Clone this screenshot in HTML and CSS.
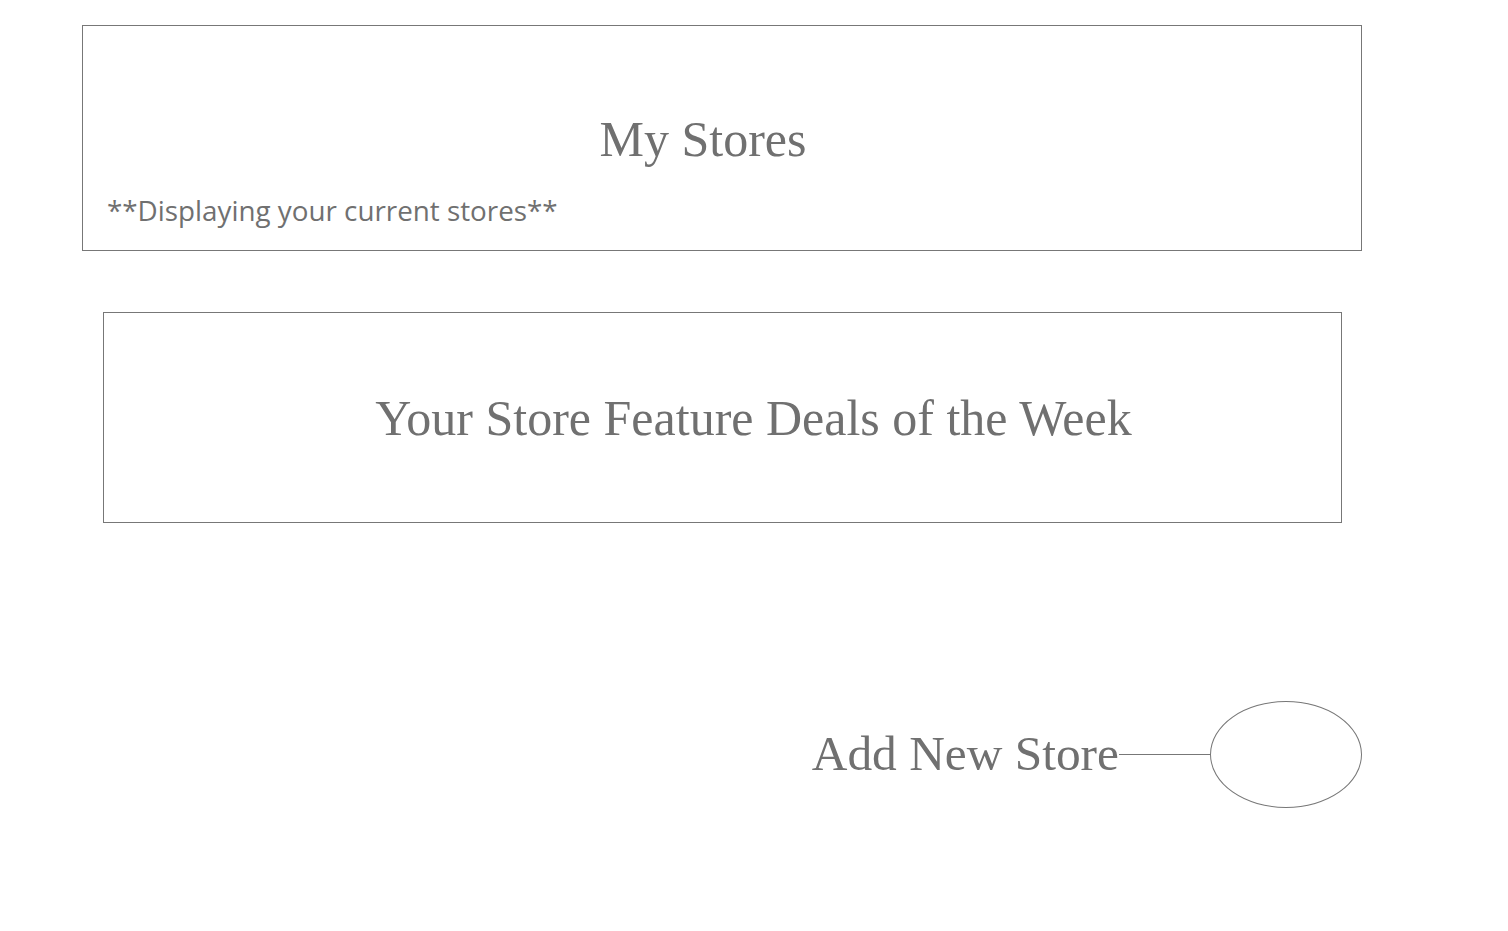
FILE: index.html
```html
<!DOCTYPE html>
<html lang="en">
<head>
<meta charset="utf-8">
<title>My Stores</title>
<link rel="stylesheet" href="styles.css">
</head>
<body>
<div class="page">
  <section class="stores-box">
    <h1 class="stores-title">My Stores</h1>
    <p class="stores-note">**Displaying your current stores**</p>
  </section>
  <section class="deals-box">
    <h2 class="deals-title">Your Store Feature Deals of the Week</h2>
  </section>
  <div class="add-row">
    <span class="add-label">Add New Store</span>
    <span class="add-connector"></span>
    <button class="add-button" type="button" aria-label="Add New Store"></button>
  </div>
</div>
</body>
</html>
```

FILE: styles.css
```css
html, body {
  margin: 0;
  padding: 0;
  background: #ffffff;
}

.page {
  width: 1444px;
  padding-top: 25px;
  color: #707070;
}

.stores-box {
  width: 1280px;
  height: 226px;
  box-sizing: border-box;
  margin: 0 auto;
  border: 1px solid #777777;
  padding: 84px 0 0 24px;
}

.stores-title {
  margin: 0;
  padding-right: 62px;
  text-align: center;
  font-family: "Liberation Serif", "Times New Roman", serif;
  font-weight: normal;
  font-size: 50px;
  line-height: 58px;
}

.stores-note {
  margin: 26px 0 0;
  font-family: "Open Sans", "Noto Sans", sans-serif;
  font-size: 27.8px;
  line-height: 32px;
  white-space: nowrap;
}

.deals-box {
  width: 1239px;
  height: 211px;
  box-sizing: border-box;
  margin: 61px auto 0;
  border: 1px solid #777777;
  display: flex;
  align-items: center;
  justify-content: center;
  padding-left: 63px;
}

.deals-title {
  margin: 0;
  font-family: "Liberation Serif", "Times New Roman", serif;
  font-weight: normal;
  font-size: 50px;
  line-height: 58px;
}

.add-row {
  margin: 178px 82px 0 0;
  display: flex;
  justify-content: flex-end;
  align-items: center;
}

.add-label {
  font-family: "Liberation Serif", "Times New Roman", serif;
  font-size: 49.4px;
  line-height: 58px;
  padding-bottom: 2px;
}

.add-connector {
  width: 91px;
  height: 1px;
  background: #777777;
}

.add-button {
  width: 152px;
  height: 107px;
  box-sizing: border-box;
  border: 1px solid #777777;
  border-radius: 50%;
  background: #ffffff;
  padding: 0;
  margin: 0;
}
```
